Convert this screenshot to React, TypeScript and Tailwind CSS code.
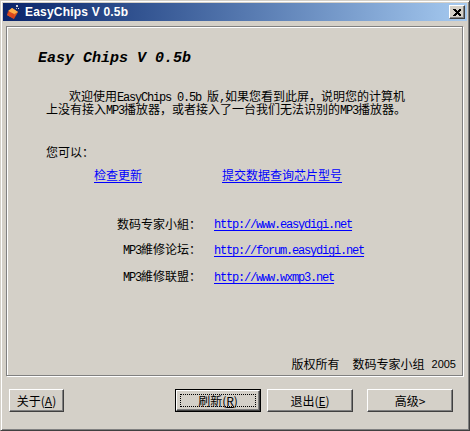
import type { ReactNode } from 'react'

const cjk = "font-['Noto_Sans_CJK_SC',sans-serif]"

function Lat({ children }: { children: ReactNode }) {
  return (
    <span className="font-['Liberation_Mono',monospace] text-[12px] tracking-[-1.2px]">
      {children}
    </span>
  )
}

function AppIcon() {
  return (
    <svg width="16" height="16" viewBox="0 0 16 16">
      <defs>
        <linearGradient id="chip" x1="0" y1="0" x2="1" y2="1">
          <stop offset="0" stopColor="#ffc850" />
          <stop offset="0.5" stopColor="#f07a28" />
          <stop offset="1" stopColor="#b01c0c" />
        </linearGradient>
      </defs>
      <polygon points="7,4 13,8 9,15 2,11" fill="url(#chip)" />
      <polygon points="7,4 13,8 9,10 3,7" fill="#ffb048" />
      <polygon points="2,11 3,7 9,10 9,15" fill="#d8401c" opacity="0.85" />
      <rect x="11" y="1" width="2" height="2" fill="#d0d0d8" />
      <rect x="13" y="4" width="1" height="1" fill="#e8e8f0" />
      <rect x="11" y="4" width="1" height="1" fill="#a8a8b8" />
    </svg>
  )
}

function CloseIcon() {
  return (
    <svg width="8" height="7" viewBox="0 0 8 7" shapeRendering="crispEdges">
      <path
        d="M0 0h2l2 2 2-2h2v1L5.5 3.5 8 6v1H6L4 5 2 7H0V6l2.5-2.5L0 1z"
        fill="#000"
      />
    </svg>
  )
}

function Btn({ children, w, primary }: { children: ReactNode; w: string; primary?: boolean }) {
  const face =
    'flex items-center justify-center border border-t-white border-l-white border-r-[#404040] border-b-[#404040] bg-[#d4d0c8] shadow-[inset_-1px_-1px_0_#808080] text-[12px] text-black ' +
    cjk
  if (primary) {
    return (
      <div className={`${w} h-[23px] border border-black`}>
        <div className={`${face} h-full w-full p-[3px]`}>
          <div className="flex h-full w-full items-center justify-center border border-dotted border-black">
            {children}
          </div>
        </div>
      </div>
    )
  }
  return <div className={`${face} ${w} h-[23px]`}>{children}</div>
}

function SiteRow({ label, url, top }: { label: ReactNode; url: string; top: string }) {
  return (
    <div className={`${top} flex h-[12px] items-center leading-[12px]`}>
      <span className="w-[194px] text-right whitespace-nowrap">{label}</span>
      <span className="ml-[13px] text-[#0000ff] underline underline-offset-2">
        <Lat>{url}</Lat>
      </span>
    </div>
  )
}

export default function App() {
  return (
    <div className="h-[431px] w-[470px] overflow-hidden border border-t-[#d4d0c8] border-l-[#d4d0c8] border-r-[#404040] border-b-[#404040] bg-[#d4d0c8] p-[2px] shadow-[inset_1px_1px_0_#fff,inset_-1px_-1px_0_#808080]">
      <div className="flex h-[18px] items-center bg-linear-to-r from-[#0a246a] to-[#a6caf0] pr-[2px] pl-[2px]">
        <AppIcon />
        <span className="ml-[4px] font-['Liberation_Sans',sans-serif] text-[12px] leading-none font-bold tracking-[0.2px] text-white">
          EasyChips V 0.5b
        </span>
        <div className="ml-auto flex h-[14px] w-[16px] items-center justify-center border border-t-white border-l-white border-r-[#404040] border-b-[#404040] bg-[#d4d0c8] shadow-[inset_-1px_-1px_0_#808080]">
          <CloseIcon />
        </div>
      </div>

      <div
        className={`mt-[5px] ml-[3px] flex h-[350px] w-[457px] flex-col border border-[#808080] text-[12px] text-black shadow-[1px_1px_0_#fff,inset_1px_1px_0_#fff] ${cjk}`}
      >
        <div className="mt-[23px] ml-[31px] h-[18px] font-['Liberation_Mono',monospace] text-[15px] leading-[18px] font-bold italic">
          Easy Chips V 0.5b
        </div>

        <div className="mt-[22px] ml-[39px] leading-[12px]">
          <div className="h-[12px] pl-[23px] whitespace-nowrap">
            欢迎使用<Lat>EasyChips 0.5b </Lat>版<Lat>,</Lat>如果您看到此屏，说明您的计算机
          </div>
          <div className="mt-[1px] h-[12px] whitespace-nowrap">
            上没有接入<Lat>MP3</Lat>播放器，或者接入了一台我们无法识别的<Lat>MP3</Lat>播放器。
          </div>
        </div>

        <div className="mt-[31px] ml-[39px] h-[12px] leading-[12px]">您可以：</div>

        <div className="mt-[11px] ml-[87px] flex h-[12px] gap-[80px] leading-[12px] text-[#0000ff]">
          <span className="underline underline-offset-2">检查更新</span>
          <span className="underline underline-offset-2">提交数据查询芯片型号</span>
        </div>

        <SiteRow top="mt-[37px]" label="数码专家小組：" url="http://www.easydigi.net" />
        <SiteRow
          top="mt-[14px]"
          label={
            <>
              <Lat>MP3</Lat>維修论坛：
            </>
          }
          url="http://forum.easydigi.net"
        />
        <SiteRow
          top="mt-[15px]"
          label={
            <>
              <Lat>MP3</Lat>維修联盟：
            </>
          }
          url="http://www.wxmp3.net"
        />

        <div className="mt-auto mb-[5px] flex h-[12px] justify-end pr-[6px] leading-[12px]">
          <span>版权所有</span>
          <span className="ml-[13px]">数码专家小组</span>
          <span className="ml-[7px] font-['Liberation_Sans',sans-serif] text-[11px]">2005</span>
        </div>
      </div>

      <div className="mt-[13px] flex items-center pr-[14px] pl-[6px]">
        <Btn w="w-[55px]">
          关于(<span className="underline">A</span>)
        </Btn>
        <div className="ml-auto flex gap-[6px]">
          <Btn w="w-[86px]" primary>
            刷新(<span className="underline">R</span>)
          </Btn>
          <Btn w="w-[86px]">
            退出(<span className="underline">E</span>)
          </Btn>
        </div>
        <div className="ml-[14px]">
          <Btn w="w-[86px]">高级&gt;</Btn>
        </div>
      </div>
    </div>
  )
}
